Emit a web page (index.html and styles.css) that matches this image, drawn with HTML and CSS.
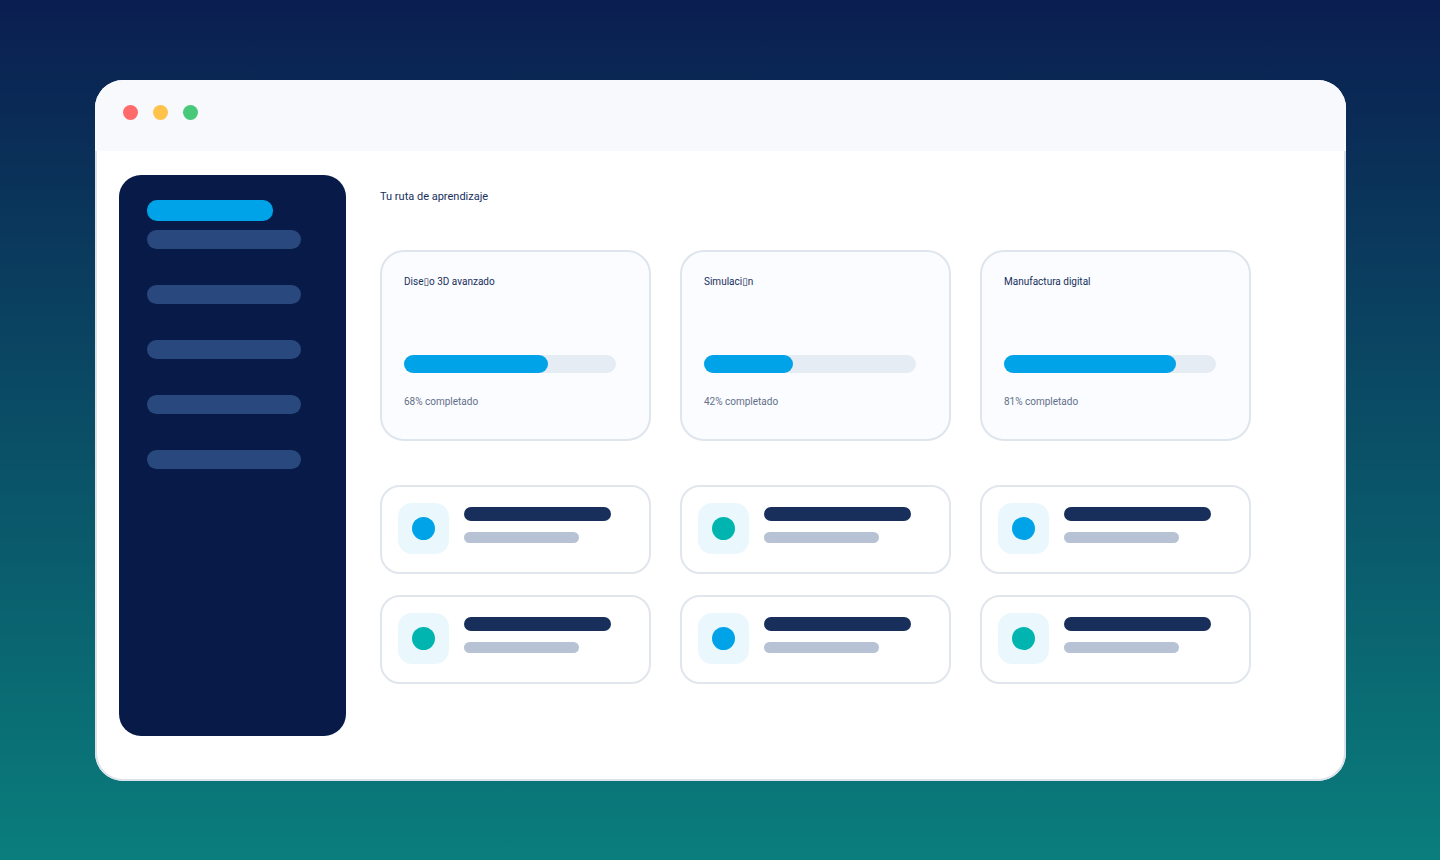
FILE: index.html
```html
<!DOCTYPE html>
<html lang="es">
<head>
    <meta charset="UTF-8">
    <meta name="viewport" content="width=device-width, initial-scale=1.0">
    <title>Tu ruta de aprendizaje</title>
    <link rel="stylesheet" href="styles.css">
</head>
<body>
    <div class="window">
        <header class="topbar">
            <span class="dot red"></span>
            <span class="dot yellow"></span>
            <span class="dot green"></span>
        </header>

        <div class="layout">
            <nav class="sidebar">
                <span class="item active"></span>
                <span class="item"></span>
                <span class="item"></span>
                <span class="item"></span>
                <span class="item"></span>
                <span class="item"></span>
            </nav>

            <main class="content">
                <h1>Tu ruta de aprendizaje</h1>

                <!-- Cursos -->
                <section class="grid courses">
                    <article class="course">
                        <h2>Dise<span class="box">▯</span>o 3D avanzado</h2>
                        <div class="track"><div class="fill" style="width: 68%"></div></div>
                        <p>68% completado</p>
                    </article>
                    <article class="course">
                        <h2>Simulaci<span class="box">▯</span>n</h2>
                        <div class="track"><div class="fill" style="width: 42%"></div></div>
                        <p>42% completado</p>
                    </article>
                    <article class="course">
                        <h2>Manufactura digital</h2>
                        <div class="track"><div class="fill" style="width: 81%"></div></div>
                        <p>81% completado</p>
                    </article>
                </section>

                <!-- Recursos -->
                <section class="grid resources">
                    <div class="resource">
                        <div class="icon"><span class="blue"></span></div>
                        <div class="lines"><span class="line"></span><span class="line short"></span></div>
                    </div>
                    <div class="resource">
                        <div class="icon"><span class="teal"></span></div>
                        <div class="lines"><span class="line"></span><span class="line short"></span></div>
                    </div>
                    <div class="resource">
                        <div class="icon"><span class="blue"></span></div>
                        <div class="lines"><span class="line"></span><span class="line short"></span></div>
                    </div>
                    <div class="resource">
                        <div class="icon"><span class="teal"></span></div>
                        <div class="lines"><span class="line"></span><span class="line short"></span></div>
                    </div>
                    <div class="resource">
                        <div class="icon"><span class="blue"></span></div>
                        <div class="lines"><span class="line"></span><span class="line short"></span></div>
                    </div>
                    <div class="resource">
                        <div class="icon"><span class="teal"></span></div>
                        <div class="lines"><span class="line"></span><span class="line short"></span></div>
                    </div>
                </section>
            </main>
        </div>
    </div>
</body>
</html>
```
FILE: styles.css
```css
* {
    box-sizing: border-box;
}
body {
    margin: 0;
    min-height: 100vh;
    padding: 80px 94px 79px 95px;
    display: flex;
    background: linear-gradient(#0a1e50, #0a7e7c);
    font-family: Roboto, Arial, sans-serif;
    font-size: 11px;
    line-height: 16px;
    color: #182f5c;
}
h1, h2, p {
    margin: 0;
    font-weight: 400;
}
h1 {
    font-size: 11px;
}
h2, p {
    font-size: 10px;
}

/* Ventana */
.window {
    flex: 1;
    display: flex;
    flex-direction: column;
    background: #fff;
    border-radius: 28px;
}
.topbar {
    display: flex;
    gap: 15px;
    height: 71px;
    padding: 25px 28px;
    background: #f8f9fd;
    border-radius: 28px 28px 0 0;
}
.dot {
    width: 15px;
    height: 15px;
    border-radius: 50%;
}
.red {
    background: #ff6b6b;
}
.yellow {
    background: #ffc24b;
}
.green {
    background: #48c97a;
}
.layout {
    flex: 1;
    display: flex;
    gap: 34px;
    padding: 24px 93px 43px 22px;
    border: 2px solid #dbe2ea;
    border-top: 0;
    border-radius: 0 0 28px 28px;
}

/* Menu lateral */
.sidebar {
    flex: 0 0 227px;
    display: flex;
    flex-direction: column;
    gap: 36px;
    padding: 25px 28px;
    background: #081b48;
    border-radius: 22px;
}
.item {
    width: 154px;
    height: 19px;
    background: #29487d;
    border-radius: 10px;
}
.item.active {
    width: 126px;
    height: 21px;
    margin-bottom: -27px;
    background: #00a3e8;
}

/* Contenido */
.content {
    flex: 1;
    padding-top: 14px;
}
.grid {
    display: grid;
    grid-template-columns: repeat(3, 1fr);
    gap: 21px 29px;
}
.courses {
    margin: 45px 0 44px;
}
.course {
    padding: 22px 33px 29px 22px;
    background: #fbfcff;
    border: 2px solid #dfe5ed;
    border-radius: 24px;
}
.box {
    font-family: "DejaVu Sans", sans-serif;
    line-height: 1;
}
.track {
    height: 18px;
    margin: 65px 0 21px;
    background: #e5ecf4;
    border-radius: 9px;
}
.fill {
    height: 100%;
    background: #00a3e8;
    border-radius: 9px;
}
.course p {
    color: #637089;
}
.resource {
    display: flex;
    gap: 15px;
    height: 89px;
    padding: 16px;
    border: 2px solid #e1e5ec;
    border-radius: 20px;
}
.icon {
    width: 51px;
    height: 51px;
    display: flex;
    align-items: center;
    justify-content: center;
    background: #eaf8fe;
    border-radius: 14px;
}
.icon span {
    width: 23px;
    height: 23px;
    border-radius: 50%;
}
.blue {
    background: #00a3e8;
}
.teal {
    background: #00b5b0;
}
.lines {
    display: flex;
    flex-direction: column;
    gap: 11px;
    padding-top: 4px;
}
.line {
    width: 147px;
    height: 14px;
    background: #182f5c;
    border-radius: 7px;
}
.line.short {
    width: 115px;
    height: 11px;
    background: #b7c3d5;
    border-radius: 6px;
}
```
